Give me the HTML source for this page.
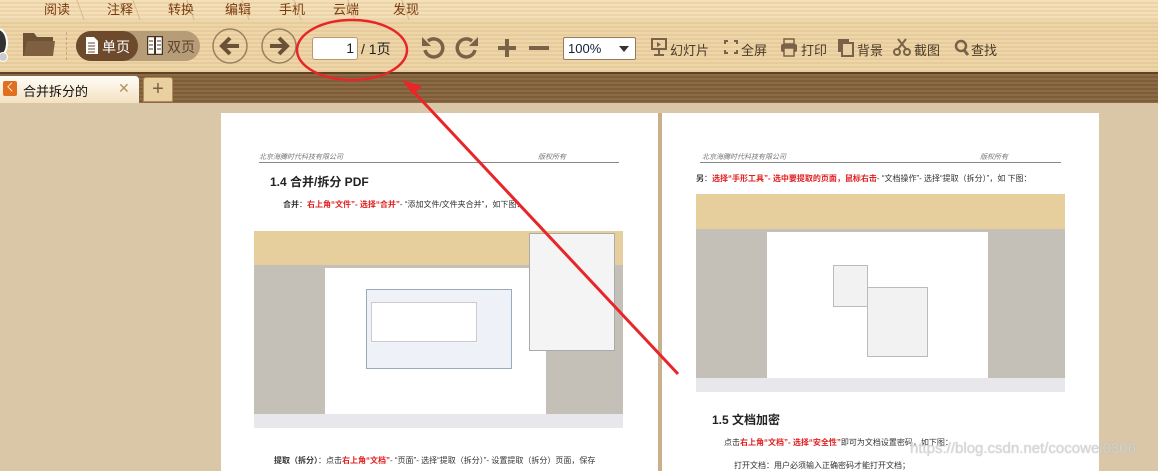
<!DOCTYPE html>
<html><head><meta charset="utf-8"><style>
*{margin:0;padding:0;box-sizing:border-box}
body{width:1158px;height:471px;overflow:hidden;position:relative;font-family:"Liberation Sans","Noto Sans CJK SC",sans-serif;background:#d9c7a8}
.abs{position:absolute}
#tabs{left:0;top:0;width:1158px;height:20px;background:repeating-linear-gradient(180deg,#f3dfb8 0 2px,#ecd4a8 2px 4px)}
.mt{position:absolute;top:0;height:20px;font-size:13px;color:#7a3a10;text-align:center;line-height:19px;width:70px}
.sep{position:absolute;top:0;width:1px;height:20px;background:#d8b888;transform:skewX(20deg)}
#tool{left:0;top:20px;width:1158px;height:52px;background:repeating-linear-gradient(180deg,#eed6a8 0 2px,#e6cc9c 2px 4px)}
#strip{left:0;top:72px;width:1158px;height:31px;background:repeating-linear-gradient(180deg,#8c6b44 0 2px,#7e5e3a 2px 4px);border-top:2px solid #5e4226}
.lbl{position:absolute;font-size:13px;color:#4a3a28;top:40px}
</style></head><body>
<div id="tabs" class="abs">
<div class="mt" style="left:22px">阅读</div>
<div class="mt" style="left:85px">注释</div>
<div class="mt" style="left:146px">转换</div>
<div class="mt" style="left:203px">编辑</div>
<div class="mt" style="left:257px">手机</div>
<div class="mt" style="left:311px">云端</div>
<div class="mt" style="left:371px">发现</div>
<div class="sep" style="left:80px"></div><div class="sep" style="left:136px"></div><div class="sep" style="left:190px"></div><div class="sep" style="left:245px"></div><div class="sep" style="left:297px"></div><div class="sep" style="left:351px"></div><div class="sep" style="left:405px"></div>
</div>
<div id="tool" class="abs"></div>
<div class="abs" style="left:-12px;top:28px;width:20px;height:30px;border-radius:50%;background:#333;border:2px solid #fff"></div>
<div class="abs" style="left:-2px;top:52px;width:10px;height:10px;border-radius:50%;background:#ccc;border:1px solid #fff"></div>
<svg class="abs" style="left:22px;top:30px" width="34" height="28"><path d="M1 3h11l3 4h16v4H6L3 26H1z" fill="#6e5236"/><path d="M5 11h28l-2 15H2z" fill="#7e6040"/></svg>
<div class="abs" style="left:66px;top:32px;width:1px;height:28px;border-left:1px dashed #c8a878"></div>
<div class="abs" style="left:76px;top:31px;width:124px;height:30px;border-radius:15px;background:#b79c78"></div>
<div class="abs" style="left:76px;top:31px;width:62px;height:30px;border-radius:15px;background:#6e4a2c"></div>
<svg class="abs" style="left:85px;top:36px" width="14" height="19"><path d="M1 1h8l4 4v13H1z" fill="#fff"/><path d="M3 7h7M3 10h7M3 13h7M3 16h7" stroke="#6e4a2c"/></svg>
<div class="abs" style="left:102px;top:37px;font-size:14px;color:#fff">单页</div>
<svg class="abs" style="left:147px;top:36px" width="16" height="19"><rect x="0.5" y="0.5" width="15" height="18" fill="#fff" stroke="#4a3420" stroke-width="1.5"/><path d="M8 0v19" stroke="#4a3420" stroke-width="2"/><path d="M2 5h4M2 9h4M2 13h4M10 5h4M10 9h4M10 13h4" stroke="#4a3420"/></svg>
<div class="abs" style="left:167px;top:37px;font-size:14px;color:#5a4430">双页</div>
<svg class="abs" style="left:211px;top:27px" width="90" height="38"><circle cx="19" cy="19" r="17" fill="none" stroke="#9a8060" stroke-width="1.5"/><path d="M28 19H12M19 11l-8 8 8 8" fill="none" stroke="#6a5238" stroke-width="4"/><circle cx="68" cy="19" r="17" fill="none" stroke="#9a8060" stroke-width="1.5"/><path d="M59 19h16M68 11l8 8-8 8" fill="none" stroke="#6a5238" stroke-width="4"/></svg>
<div class="abs" style="left:312px;top:37px;width:46px;height:23px;background:#fff;border:1px solid #b89870;border-radius:3px;font-size:14px;text-align:right;padding-right:3px;line-height:21px;color:#222">1</div>
<div class="abs" style="left:361px;top:39px;font-size:14px;color:#222">/ 1页</div>
<svg class="abs" style="left:420px;top:34px" width="130" height="28"><path d="M8 7a9 9 0 1 1-3 9" fill="none" stroke="#7a6248" stroke-width="3.5"/><path d="M2 3v9h9z" fill="#7a6248"/><path d="M52 7a9 9 0 1 0 3 9" fill="none" stroke="#7a6248" stroke-width="3.5"/><path d="M58 3v9h-9z" fill="#7a6248"/><path d="M87 5v18M78 14h18" stroke="#7a6248" stroke-width="4"/><path d="M109 14h20" stroke="#7a6248" stroke-width="4"/></svg>
<div class="abs" style="left:563px;top:37px;width:73px;height:23px;background:#fff;border:1px solid #9a7a58;border-radius:2px;font-size:13px;padding-left:4px;line-height:21px;color:#123">100%<span style="position:absolute;right:6px;top:8px;border:5px solid transparent;border-top:6px solid #333"></span></div>
<svg class="abs" style="left:650px;top:38px" width="320" height="20" fill="#7a6248">
<rect x="2" y="1" width="14" height="10" fill="none" stroke="#7a6248" stroke-width="2"/><path d="M7 4l4 2.5-4 2.5z"/><path d="M9 11v5M4 17h10" stroke="#7a6248" stroke-width="2"/>
<path d="M74 2h4v2h-2v2h-2zM88 2h-4v2h2v2h2zM74 16h4v-2h-2v-2h-2zM88 16h-4v-2h2v-2h2z"/>
<rect x="131" y="6" width="16" height="8" rx="2"/><rect x="134" y="1" width="10" height="5" fill="none" stroke="#7a6248" stroke-width="1.5"/><rect x="134" y="10" width="10" height="8" fill="#e8d0a4" stroke="#7a6248" stroke-width="1.5"/>
<rect x="188" y="1" width="11" height="13"/><rect x="192" y="5" width="11" height="13" fill="#e8d0a4" stroke="#7a6248" stroke-width="2"/>
<circle cx="247" cy="14" r="3" fill="none" stroke="#7a6248" stroke-width="2"/><circle cx="257" cy="14" r="3" fill="none" stroke="#7a6248" stroke-width="2"/><path d="M248 11l8-10M256 11l-8-10" stroke="#7a6248" stroke-width="2"/>
<circle cx="311" cy="8" r="5" fill="none" stroke="#7a6248" stroke-width="2.5"/><path d="M314 12l4 5" stroke="#7a6248" stroke-width="3"/>
</svg>
<div class="lbl" style="left:670px">幻灯片</div>
<div class="lbl" style="left:741px">全屏</div>
<div class="lbl" style="left:801px">打印</div>
<div class="lbl" style="left:857px">背景</div>
<div class="lbl" style="left:914px">截图</div>
<div class="lbl" style="left:971px">查找</div>
<div id="strip" class="abs"></div>
<div class="abs" style="left:0;top:76px;width:139px;height:27px;background:linear-gradient(#fffdf8,#f4e2c0);border-radius:0 4px 0 0"></div>
<div class="abs" style="left:3px;top:81px;width:14px;height:15px;background:#e07020;border-radius:2px;color:#fff;font-size:10px;text-align:center;line-height:15px">ㄑ</div>
<div class="abs" style="left:23px;top:81px;font-size:13px;color:#111">合并拆分的</div>
<div class="abs" style="left:118px;top:80px;font-size:14px;color:#b09060">✕</div>
<div class="abs" style="left:143px;top:77px;width:30px;height:25px;background:#e8d0a0;border:1px solid #b08a58;border-radius:3px 3px 0 0;text-align:center;font-size:20px;line-height:22px;color:#7a6040">+</div>
<div class="abs" style="left:221px;top:113px;width:437px;height:358px;background:#fff"></div>
<div class="abs" style="left:662px;top:113px;width:437px;height:358px;background:#fff"></div>
<div class="abs" style="left:658px;top:113px;width:4px;height:358px;background:#c9b08a"></div>
<div class="abs" style="left:259px;top:152px;font-size:7px;color:#777;font-style:italic">北京海腾时代科技有限公司</div>
<div class="abs" style="left:538px;top:152px;font-size:7px;color:#777;font-style:italic">版权所有</div>
<div class="abs" style="left:259px;top:162px;width:360px;height:1px;background:#888"></div>
<div class="abs" style="left:270px;top:173px;font-size:12px;font-weight:bold;color:#222">1.4 合并/拆分 PDF</div>
<div class="abs" style="left:283px;top:199px;font-size:8px;color:#333;white-space:nowrap"><b>合并</b>：<b style="color:#e02020">右上角“文件”- 选择“合并”</b>- “添加文件/文件夹合并”，如下图：</div>
<div class="abs" style="left:254px;top:231px;width:369px;height:197px;background:#c4c0b8"></div>
<div class="abs" style="left:254px;top:231px;width:369px;height:34px;background:#e6cf9c"></div>
<div class="abs" style="left:325px;top:268px;width:221px;height:148px;background:#fff"></div>
<div class="abs" style="left:366px;top:289px;width:146px;height:80px;background:#eef2f8;border:1px solid #9ab"></div>
<div class="abs" style="left:371px;top:302px;width:106px;height:40px;background:#fff;border:1px solid #ccc"></div>
<div class="abs" style="left:529px;top:233px;width:86px;height:118px;background:#f4f4f4;border:1px solid #aaa"></div>
<div class="abs" style="left:254px;top:414px;width:369px;height:14px;background:#e8e8ec"></div>
<div class="abs" style="left:274px;top:455px;font-size:8px;color:#333;white-space:nowrap"><b>提取（拆分）</b>：点击<b style="color:#e02020">右上角“文档”</b>- “页面”- 选择“提取（拆分）”- 设置提取（拆分）页面，保存</div>
<div class="abs" style="left:702px;top:152px;font-size:7px;color:#777;font-style:italic">北京海腾时代科技有限公司</div>
<div class="abs" style="left:980px;top:152px;font-size:7px;color:#777;font-style:italic">版权所有</div>
<div class="abs" style="left:700px;top:162px;width:361px;height:1px;background:#888"></div>
<div class="abs" style="left:696px;top:173px;font-size:8px;color:#333;white-space:nowrap"><b>另</b>：<b style="color:#e02020">选择“手形工具”- 选中要提取的页面，鼠标右击</b>- “文档操作”- 选择“提取（拆分）”，如 下图：</div>
<div class="abs" style="left:696px;top:194px;width:369px;height:198px;background:#c4c0b8"></div>
<div class="abs" style="left:696px;top:194px;width:369px;height:35px;background:#e6cf9c"></div>
<div class="abs" style="left:767px;top:232px;width:221px;height:146px;background:#fff"></div>
<div class="abs" style="left:833px;top:265px;width:35px;height:42px;background:#f2f2f2;border:1px solid #bbb"></div>
<div class="abs" style="left:867px;top:287px;width:61px;height:70px;background:#f2f2f2;border:1px solid #bbb"></div>
<div class="abs" style="left:696px;top:378px;width:369px;height:14px;background:#e8e8ec"></div>
<div class="abs" style="left:712px;top:411px;font-size:12px;font-weight:bold;color:#222">1.5 文档加密</div>
<div class="abs" style="left:724px;top:437px;font-size:8px;color:#333;white-space:nowrap">点击<b style="color:#e02020">右上角“文档”- 选择“安全性”</b>即可为文档设置密码，如下图：</div>
<div class="abs" style="left:734px;top:460px;font-size:8px;color:#333;white-space:nowrap">打开文档：用户必须输入正确密码才能打开文档；</div>
<div class="abs" style="left:910px;top:440px;font-size:15px;white-space:nowrap;color:rgba(215,215,215,0.9);text-shadow:0 0 1px rgba(150,150,150,0.6)">https://blog.csdn.net/cocowei0306</div>
<svg class="abs" style="left:0;top:0" width="1158" height="471">
<ellipse cx="352" cy="50" rx="55" ry="30" fill="none" stroke="#e8262a" stroke-width="2.5"/>
<path d="M678 374L412 90" stroke="#e8262a" stroke-width="3"/>
<path d="M402 80l20 6-9 9z" fill="#e8262a"/>
</svg>
</body></html>
